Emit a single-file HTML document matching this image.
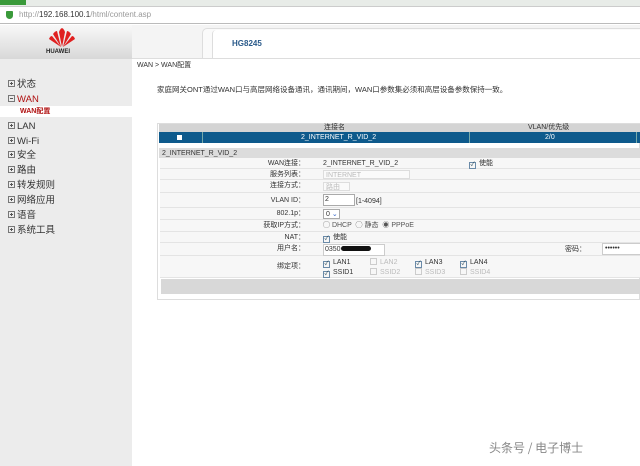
<!DOCTYPE html><html><head><meta charset="utf-8"><style>
*{margin:0;padding:0;box-sizing:border-box}
body{width:640px;height:466px;overflow:hidden;background:#fff;font-family:"Liberation Sans","Noto Sans CJK SC",sans-serif;font-size:7px;line-height:9px;color:#333;position:relative}
.a{position:absolute}
.row{position:absolute;left:160px;width:480px;height:11px;border-bottom:1px solid #e4e4e4;background:#f7f7f7}
.lb{position:absolute;right:335px;top:1px;font-size:7px}
.v{position:absolute;left:163px;top:1px}
.cb{display:inline-block;width:7px;height:7px;border:1px solid #6a8aa8;vertical-align:-1px;margin-right:3px;font-size:6px;line-height:5px;text-align:center;color:#245}
.cbd{border-color:#ccc}
.menu div{position:absolute;left:8px;font-size:9.5px;line-height:11px;color:#333}
.box{display:inline-block;width:7px;height:7px;border:1px solid #777;vertical-align:0;margin-right:2px;position:relative}
.box:before{content:"";position:absolute;left:1px;top:2px;width:3px;height:1px;background:#555}
.box.p:after{content:"";position:absolute;left:2px;top:1px;width:1px;height:3px;background:#555}
</style></head><body>
<div class="a" style="left:0;top:0;width:640px;height:6px;background:#e8ece8"></div>
<div class="a" style="left:0;top:0;width:26px;height:5px;background:#3a9a3a"></div>
<div class="a" style="left:0;top:6px;width:640px;height:18px;background:#fff;border-top:1px solid #ccc;border-bottom:1px solid #bbb"></div>
<div class="a" style="left:6px;top:11px;width:7px;height:8px;background:#3a9a3a;border-radius:1px 1px 4px 4px"></div>
<div class="a" style="left:19px;top:10px;font-size:8px;color:#999">http://<span style="color:#333">192.168.100.1</span>/html/content.asp</div>
<div class="a" style="left:0;top:25px;width:132px;height:441px;background:#ececec"></div>
<div class="a" style="left:0;top:25px;width:132px;height:34px;background:linear-gradient(#f8f8f8,#d8d8d8)"></div>
<svg class="a" style="left:48px;top:28px" width="28" height="20" viewBox="0 0 28 20"><g fill="#e02020"><path d="M14 19 L11 4 Q12 1 14 0 Q16 1 17 4Z"/><path d="M13 19 L5 6 Q7 3 9 3Z"/><path d="M15 19 L23 6 Q21 3 19 3Z"/><path d="M13 19 L1 11 Q2 8 4 8Z"/><path d="M15 19 L27 11 Q26 8 24 8Z"/></g></svg>
<div class="a" style="left:46px;top:48px;font-size:6px;font-weight:bold;color:#222">HUAWEI</div>
<div class="a" style="left:0;top:106px;width:132px;height:11px;background:#fff"></div>
<div class="menu">
<div style="top:79px"><span class="box p"></span>状态</div>
<div style="top:94px;color:#b01010"><span class="box"></span>WAN</div>
<div style="top:106px;left:20px;font-size:7px;color:#b01010;font-weight:bold">WAN配置</div>
<div style="top:121px"><span class="box p"></span>LAN</div>
<div style="top:136px"><span class="box p"></span>Wi-Fi</div>
<div style="top:150px"><span class="box p"></span>安全</div>
<div style="top:165px"><span class="box p"></span>路由</div>
<div style="top:180px"><span class="box p"></span>转发规则</div>
<div style="top:195px"><span class="box p"></span>网络应用</div>
<div style="top:210px"><span class="box p"></span>语音</div>
<div style="top:225px"><span class="box p"></span>系统工具</div>
</div>
<div class="a" style="left:132px;top:25px;width:508px;height:34px;background:#f4f4f4;border-bottom:1px solid #ddd"></div>
<div class="a" style="left:202px;top:28px;width:438px;height:30px;background:#fafafa;border-left:1px solid #ddd;border-top:1px solid #ddd;border-radius:5px 0 0 0"></div>
<div class="a" style="left:212px;top:30px;width:428px;height:28px;background:#fff;border-left:1px solid #ddd;border-radius:4px 0 0 0"></div>
<div class="a" style="left:232px;top:39px;font-size:8px;font-weight:bold;color:#2a5a8a">HG8245</div>
<div class="a" style="left:137px;top:61px;font-size:7px">WAN &gt; WAN配置</div>
<div class="a" style="left:157px;top:85px;font-size:7.5px">家庭网关ONT通过WAN口与高层网络设备通讯，通讯期间，WAN口参数集必须和高层设备参数保持一致。</div>
<div class="a" style="left:157px;top:123px;width:483px;height:177px;border:1px solid #ddd;background:#fff"></div>
<div class="a" style="left:159px;top:124px;width:481px;height:8px;background:#d4d4d4"></div>
<div class="a" style="left:324px;top:123px">连接名</div>
<div class="a" style="left:528px;top:123px">VLAN/优先级</div>
<div class="a" style="left:159px;top:132px;width:481px;height:11px;background:#0e5a8c;color:#fff"></div>
<div class="a" style="left:202px;top:132px;width:1px;height:11px;background:#7aa"></div>
<div class="a" style="left:469px;top:132px;width:1px;height:11px;background:#7aa"></div>
<div class="a" style="left:636px;top:132px;width:1px;height:11px;background:#7aa"></div>
<div class="a" style="left:177px;top:135px;width:5px;height:5px;background:#fff"></div>
<div class="a" style="left:301px;top:133px;color:#fff">2_INTERNET_R_VID_2</div>
<div class="a" style="left:545px;top:133px;color:#fff">2/0</div>
<div class="a" style="left:159px;top:148px;width:481px;height:10px;background:#dcdcdc"></div>
<div class="a" style="left:162px;top:149px">2_INTERNET_R_VID_2</div>
<div class="row" style="top:158px"><span class="lb">WAN连接：</span><span class="v">2_INTERNET_R_VID_2</span><span class="a" style="left:309px;top:1px"><span class="cb">✓</span>使能</span></div>
<div class="row" style="top:169px"><span class="lb">服务列表：</span><span class="v" style="top:1px;width:87px;height:9px;border:1px solid #ddd;color:#bbb;padding-left:2px;background:#fafafa">INTERNET</span></div>
<div class="row" style="top:180px;height:13px"><span class="lb">连接方式：</span><span class="v" style="top:2px;width:27px;height:9px;border:1px solid #ddd;color:#bbb;padding-left:2px;background:#fafafa">路由</span></div>
<div class="row" style="top:193px;height:15px"><span class="lb" style="top:3px">VLAN ID：</span><span class="v" style="width:32px;height:12px;border:1px solid #aaa;background:#fff;padding-left:1px">2</span><span class="a" style="left:196px;top:4px">[1-4094]</span></div>
<div class="row" style="top:208px;height:12px"><span class="lb">802.1p：</span><span class="v" style="width:17px;height:10px;border:1px solid #aaa;background:#fff;padding-left:2px">0 <span style="color:#36c">⌄</span></span></div>
<div class="row" style="top:220px;height:12px"><span class="lb">获取IP方式：</span><span class="v" style="color:#555">◯ DHCP &nbsp;◯ 静态 &nbsp;◉ PPPoE</span></div>
<div class="row" style="top:232px;height:11px"><span class="lb">NAT：</span><span class="v"><span class="cb">✓</span>使能</span></div>
<div class="row" style="top:243px;height:13px"><span class="lb">用户名：</span><span class="v" style="width:62px;height:12px;border:1px solid #ccc;background:#fff;padding-left:1px">0350<span style="display:inline-block;width:30px;height:5px;background:#111;border-radius:3px"></span></span><span class="a" style="left:405px;top:2px">密码：</span><span class="a" style="left:442px;top:0;width:40px;height:12px;border:1px solid #ccc;background:#fff;padding-left:2px">••••••</span></div>
<div class="row" style="top:256px;height:22px"><span class="lb" style="top:6px">绑定项：</span>
<span class="a" style="left:163px;top:2px"><span class="cb">✓</span>LAN1</span><span class="a" style="left:210px;top:2px;color:#bbb"><span class="cb cbd"></span>LAN2</span><span class="a" style="left:255px;top:2px"><span class="cb">✓</span>LAN3</span><span class="a" style="left:300px;top:2px"><span class="cb">✓</span>LAN4</span>
<span class="a" style="left:163px;top:12px"><span class="cb">✓</span>SSID1</span><span class="a" style="left:210px;top:12px;color:#bbb"><span class="cb cbd"></span>SSID2</span><span class="a" style="left:255px;top:12px;color:#bbb"><span class="cb cbd"></span>SSID3</span><span class="a" style="left:300px;top:12px;color:#bbb"><span class="cb cbd"></span>SSID4</span></div>
<div class="a" style="left:161px;top:279px;width:479px;height:15px;background:#d8d8d8"></div>
<div class="a" style="left:489px;top:440px;font-size:12px;line-height:16px;color:#888;font-family:'Noto Sans CJK SC',sans-serif">头条号 / 电子博士</div>
</body></html>
